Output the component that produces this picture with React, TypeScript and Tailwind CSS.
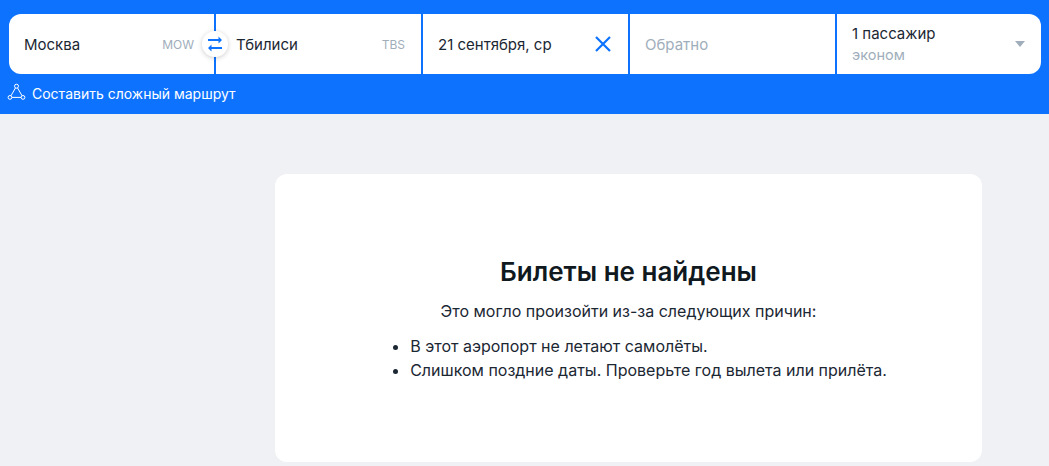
import React from 'react';

const FONT = "font-['Inter','Noto_Sans',sans-serif]";

const SwapIcon = () => (
  <svg className="overflow-visible" width="14" height="14" viewBox="0 0 14 14" fill="#0d73ff">
    <path d="M0 2h10.5V-0.5L14 3l-3.5 3.5V4H0z" />
    <path d="M14 10H3.5V7.5L0 11l3.5 3.5V12H14z" />
  </svg>
);

const RouteIcon = () => (
  <svg className="-ml-px overflow-visible" width="17" height="20" viewBox="0 0 17 20" fill="none" stroke="#fff" strokeWidth="1">
    <circle cx="8.5" cy="2.2" r="2" />
    <circle cx="2" cy="13.4" r="1.9" />
    <circle cx="15" cy="13.4" r="1.9" />
    <path d="M7.5 3.9 3 11.7M9.5 3.9l4.5 7.8M3.9 13.4h9.2" />
  </svg>
);

const App: React.FC = () => {
  return (
    <div className={`${FONT} h-[466px] w-[1049px] overflow-hidden bg-[#eff1f5]`}>
      <header className="h-[114px] bg-[#0d73ff] pl-[9px] pr-2 pt-[14px]">
        <div className="flex h-[60px] gap-[2px]">
          <div className="relative flex w-[205px] items-center justify-between rounded-l-xl bg-white pl-[15px] pr-5 text-[15px] text-[#1b2733]">
            <span className="mt-[2px]">Москва</span>
            <span className="mt-[2px] text-xs text-[#a0aebb]">MOW</span>
            <button className="absolute right-[-14px] top-[17px] z-10 flex h-[26px] w-[26px] items-center justify-center rounded-full bg-white shadow-[0_1px_5px_rgba(0,0,0,0.2)]">
              <SwapIcon />
            </button>
          </div>
          <div className="flex w-[205px] items-center justify-between bg-white pl-5 pr-4 text-[15px] text-[#1b2733]">
            <span className="mt-[2px]">Тбилиси</span>
            <span className="mt-[2px] text-xs text-[#a0aebb]">TBS</span>
          </div>
          <div className="flex w-[205px] items-center justify-between bg-white pl-[15px] pr-[17px] text-[15px] text-[#1b2733]">
            <span className="mt-[2px]">21 сентября, ср</span>
            <svg width="16" height="16" viewBox="0 0 16 16" fill="none" stroke="#0d73ff" strokeWidth="2.2">
              <path d="M1 1l14 14M15 1 1 15" />
            </svg>
          </div>
          <div className="flex w-[205px] items-center bg-white pl-[15px] text-[15px] text-[#a0aebb]">
            <span className="mt-[2px]">Обратно</span>
          </div>
          <div className="flex w-[204px] items-center justify-between rounded-r-xl bg-white pl-[15px] pr-[16px] text-[15px]">
            <div className="flex flex-col gap-[1px] leading-[20px]">
              <span className="text-[#1b2733]">1 пассажир</span>
              <span className="text-[14.5px] text-[#a0aebb]">эконом</span>
            </div>
            <div className="h-0 w-0 border-x-[5px] border-t-[6px] border-x-transparent border-t-[#a0aebb]" />
          </div>
        </div>
        <a className="mt-[10px] flex items-center gap-[7px] text-sm leading-5 text-white">
          <RouteIcon />
          <span>Составить сложный маршрут</span>
        </a>
      </header>
      <main className="pl-[275px] pt-[60px]">
        <section className="flex h-[288px] w-[707px] flex-col items-center rounded-xl bg-white pt-[82px] text-[#1b2733]">
          <h2 className="text-[26px] font-semibold leading-8 text-[#101820]">Билеты не найдены</h2>
          <p className="mt-[11px] text-base leading-6">Это могло произойти из-за следующих причин:</p>
          <ul className="mt-[11px] list-disc pl-10 text-base leading-6">
            <li>В этот аэропорт не летают самолёты.</li>
            <li>Слишком поздние даты. Проверьте год вылета или прилёта.</li>
          </ul>
        </section>
      </main>
    </div>
  );
};

export default App;
